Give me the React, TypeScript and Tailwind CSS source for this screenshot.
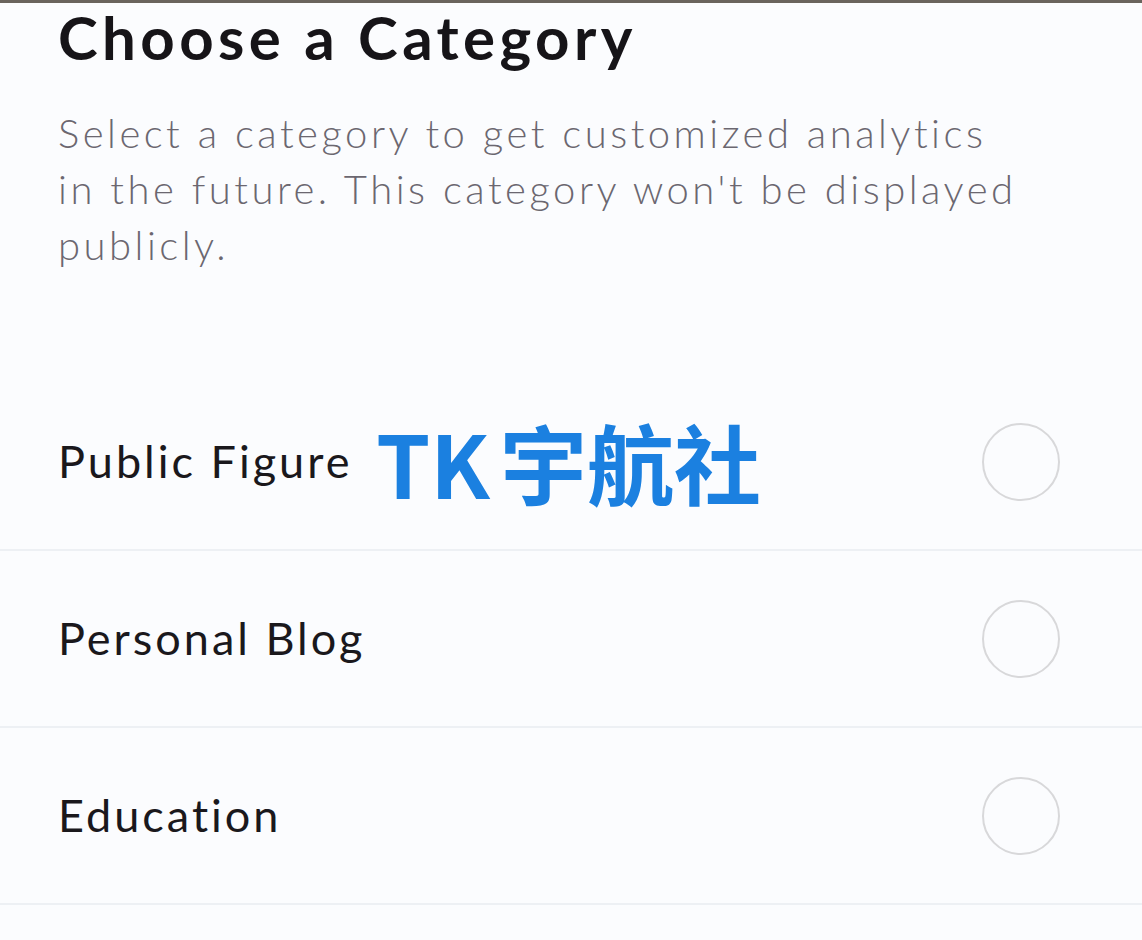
import React from "react";

const rows = ["Public Figure", "Personal Blog", "Education"];

export default function App() {
  return (
    <div
      className="w-[1142px] h-[940px] overflow-hidden bg-[#fbfcfe] border-t-[3px] border-[#6a645d] flex flex-col"
      style={{ fontFamily: "Lato, 'Noto Sans', sans-serif" }}
    >
      <div className="pl-[58px] pr-[20px]">
        <h1 className="text-[60px] leading-[68px] font-bold text-[#161418] tracking-[4.4px]">
          Choose a Category
        </h1>
        <p className="mt-[34px] text-[40px] leading-[56px] font-light text-[#6b6770] tracking-[3.5px] whitespace-nowrap">
          Select a category to get customized analytics
          <br />
          in the future. This category won't be displayed
          <br />
          publicly.
        </p>
      </div>
      <div className="mt-[101px] flex flex-col">
        {rows.map((r, i) => (
          <div
            key={r}
            className="relative h-[177px] flex items-center justify-between pl-[58px] pr-[82px] border-b-[2px] border-[#edf0f4]"
          >
            <span className="text-[45px] text-[#1a181c] tracking-[3px]">{r}</span>
            <span className="w-[78px] h-[78px] rounded-full border-[2px] border-[#d8d8da]" />
            {i === 0 && (
              <span
                className="absolute left-[376px] top-[37px] flex items-center gap-[10px] text-[87px] leading-[100px] font-bold text-[#1b80e0]"
                style={{ fontFamily: "'Noto Sans CJK SC', Lato, sans-serif" }}
              >
                <span>TK</span>
                <span>宇航社</span>
              </span>
            )}
          </div>
        ))}
        <div className="h-[40px]" />
      </div>
    </div>
  );
}
